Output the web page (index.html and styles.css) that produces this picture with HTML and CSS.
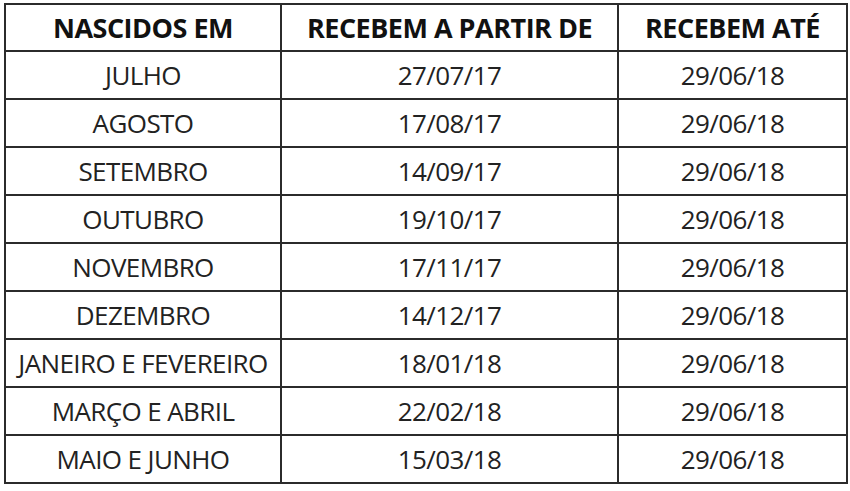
FILE: index.html
```html
<!DOCTYPE html>
<html lang="pt">
<head>
<meta charset="utf-8">
<link rel="stylesheet" href="styles.css">
</head>
<body>
<table class="schedule">
  <colgroup>
    <col class="c1"><col class="c2"><col class="c3">
  </colgroup>
  <thead>
    <tr><th>NASCIDOS EM</th><th>RECEBEM A PARTIR DE</th><th>RECEBEM ATÉ</th></tr>
  </thead>
  <tbody>
    <tr><td>JULHO</td><td>27/07/17</td><td>29/06/18</td></tr>
    <tr><td>AGOSTO</td><td>17/08/17</td><td>29/06/18</td></tr>
    <tr><td>SETEMBRO</td><td>14/09/17</td><td>29/06/18</td></tr>
    <tr><td>OUTUBRO</td><td>19/10/17</td><td>29/06/18</td></tr>
    <tr><td>NOVEMBRO</td><td>17/11/17</td><td>29/06/18</td></tr>
    <tr><td>DEZEMBRO</td><td>14/12/17</td><td>29/06/18</td></tr>
    <tr><td>JANEIRO E FEVEREIRO</td><td>18/01/18</td><td>29/06/18</td></tr>
    <tr><td>MARÇO E ABRIL</td><td>22/02/18</td><td>29/06/18</td></tr>
    <tr><td>MAIO E JUNHO</td><td>15/03/18</td><td>29/06/18</td></tr>
  </tbody>
</table>
</body>
</html>
```

FILE: styles.css
```css
html, body {
  margin: 0;
  padding: 0;
  background: #ffffff;
}
body {
  padding: 3px 0 0 4px;
  font-family: "Open Sans", "Noto Sans", sans-serif;
}
.schedule {
  border-collapse: collapse;
  table-layout: fixed;
  width: 842px;
  border: 2px solid #2b2b2b;
}
.c1 { width: 276px; }
.c2 { width: 337px; }
.c3 { width: 229px; }
.schedule th,
.schedule td {
  border: 2px solid #2b2b2b;
  text-align: center;
  padding: 0;
  white-space: nowrap;
  overflow: hidden;
}
.schedule th {
  height: 45px;
  font-weight: 700;
  font-size: 27px;
  letter-spacing: -0.5px;
  color: #111;
}
.schedule td {
  height: 46px;
  font-weight: 400;
  font-size: 26px;
  letter-spacing: -0.6px;
  color: #222;
}
```
